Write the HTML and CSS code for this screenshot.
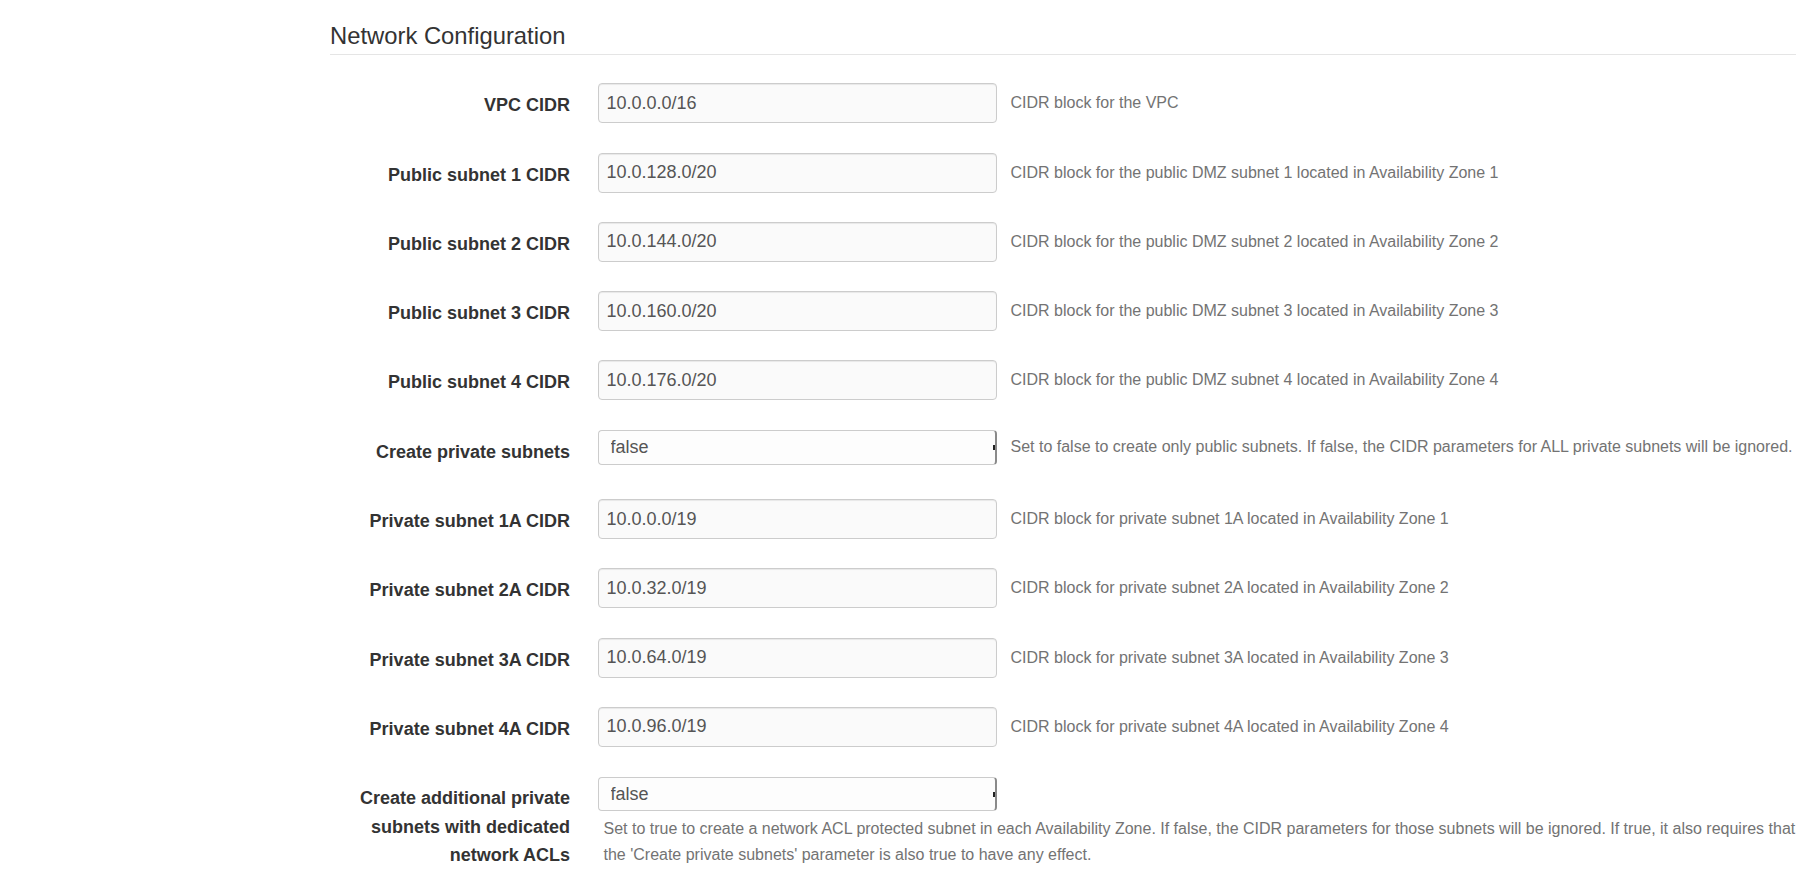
FILE: index.html
```html
<!DOCTYPE html>
<html>
<head>
<meta charset="utf-8">
<link rel="stylesheet" href="styles.css">
</head>
<body>
<div class="page">
  <h3 class="section-title">Network Configuration</h3>
  <div class="form">
    <div class="row">
      <label class="label">VPC CIDR</label>
      <div class="control"><input class="input" value="10.0.0.0/16"></div>
      <div class="help">CIDR block for the VPC</div>
    </div>
    <div class="row">
      <label class="label">Public subnet 1 CIDR</label>
      <div class="control"><input class="input" value="10.0.128.0/20"></div>
      <div class="help">CIDR block for the public DMZ subnet 1 located in Availability Zone 1</div>
    </div>
    <div class="row">
      <label class="label">Public subnet 2 CIDR</label>
      <div class="control"><input class="input" value="10.0.144.0/20"></div>
      <div class="help">CIDR block for the public DMZ subnet 2 located in Availability Zone 2</div>
    </div>
    <div class="row">
      <label class="label">Public subnet 3 CIDR</label>
      <div class="control"><input class="input" value="10.0.160.0/20"></div>
      <div class="help">CIDR block for the public DMZ subnet 3 located in Availability Zone 3</div>
    </div>
    <div class="row">
      <label class="label">Public subnet 4 CIDR</label>
      <div class="control"><input class="input" value="10.0.176.0/20"></div>
      <div class="help">CIDR block for the public DMZ subnet 4 located in Availability Zone 4</div>
    </div>
    <div class="row row-select">
      <label class="label">Create private subnets</label>
      <div class="control"><div class="select-wrap"><select class="select"><option>false</option></select></div></div>
      <div class="help">Set to false to create only public subnets. If false, the CIDR parameters for ALL private subnets will be ignored.</div>
    </div>
    <div class="row">
      <label class="label">Private subnet 1A CIDR</label>
      <div class="control"><input class="input" value="10.0.0.0/19"></div>
      <div class="help">CIDR block for private subnet 1A located in Availability Zone 1</div>
    </div>
    <div class="row">
      <label class="label">Private subnet 2A CIDR</label>
      <div class="control"><input class="input" value="10.0.32.0/19"></div>
      <div class="help">CIDR block for private subnet 2A located in Availability Zone 2</div>
    </div>
    <div class="row">
      <label class="label">Private subnet 3A CIDR</label>
      <div class="control"><input class="input" value="10.0.64.0/19"></div>
      <div class="help">CIDR block for private subnet 3A located in Availability Zone 3</div>
    </div>
    <div class="row">
      <label class="label">Private subnet 4A CIDR</label>
      <div class="control"><input class="input" value="10.0.96.0/19"></div>
      <div class="help">CIDR block for private subnet 4A located in Availability Zone 4</div>
    </div>
    <div class="row row-select row-stack">
      <label class="label">Create additional private subnets with dedicated network ACLs</label>
      <div class="stack">
        <div class="control"><div class="select-wrap"><select class="select"><option>false</option></select></div></div>
        <div class="help help-block">Set to true to create a network ACL protected subnet in each Availability Zone. If false, the CIDR parameters for those subnets will be ignored. If true, it also requires that the 'Create private subnets' parameter is also true to have any effect.</div>
      </div>
    </div>
  </div>
</div>
</body>
</html>
```

FILE: styles.css
```css
html, body {
  margin: 0;
  padding: 0;
  background: #ffffff;
}

body {
  font-family: "Liberation Sans", Arial, Helvetica, sans-serif;
  color: #333333;
}

.page {
  padding: 23px 24px 0 330px;
}

.section-title {
  margin: 0;
  font-size: 23.8px;
  line-height: 26px;
  font-weight: normal;
  color: #333333;
  padding-bottom: 5px;
  border-bottom: 1px solid #e5e5e5;
}

.form {
  padding-top: 28.3px;
}

.row {
  display: flex;
  align-items: flex-start;
  min-height: 40px;
  margin-bottom: 29.3px;
}

.label {
  flex: 0 0 240px;
  width: 240px;
  box-sizing: border-box;
  text-align: right;
  font-size: 18px;
  font-weight: bold;
  line-height: 28.6px;
  padding-top: 8px;
  color: #333333;
}

.control {
  flex: 0 0 400px;
  width: 400px;
  margin-left: 27.5px;
}

.input {
  display: block;
  box-sizing: border-box;
  width: 399.5px;
  height: 40px;
  margin: 0;
  padding: 0 8px;
  border: 1px solid #cccccc;
  border-radius: 4px;
  background: #fafafa;
  box-shadow: inset 0 1px 1px rgba(0, 0, 0, 0.075);
  font-family: "Liberation Sans", Arial, Helvetica, sans-serif;
  font-size: 18px;
  color: #555555;
  outline: none;
}

.select-wrap {
  position: relative;
  width: 399.5px;
}

.select {
  display: block;
  box-sizing: border-box;
  width: 399.5px;
  height: 34.5px;
  margin: 0;
  padding: 0 12px;
  border: 1px solid #cccccc;
  border-right: 2px solid #8a8a8a;
  border-radius: 4px;
  background: #fdfdfd;
  -webkit-appearance: none;
  appearance: none;
  font-family: "Liberation Sans", Arial, Helvetica, sans-serif;
  font-size: 18px;
  color: #555555;
  outline: none;
}

.select-wrap::after {
  content: "";
  position: absolute;
  right: 2px;
  top: 15px;
  width: 2px;
  height: 5px;
  background: #222222;
}

.help {
  margin-left: 13px;
  font-size: 16px;
  line-height: 26.7px;
  padding-top: 7px;
  color: #737373;
}

.row-select .control {
  margin-top: 0.4px;
}

.row-select > .help {
  padding-top: 4.5px;
}

.stack {
  display: flex;
  flex-direction: column;
  margin-left: 27.5px;
  flex: 1 1 auto;
  min-width: 0;
}

.stack .control {
  flex: none;
  margin-left: 0;
}

.help-block {
  margin-left: 6px;
  padding-top: 4.5px;
  padding-right: 0;
}
```
